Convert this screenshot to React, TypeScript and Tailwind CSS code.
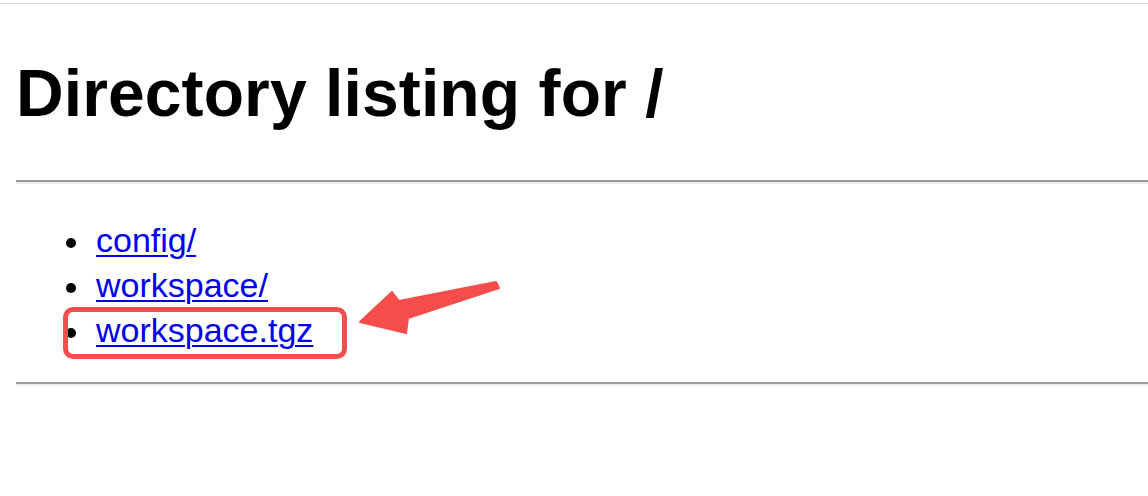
const entries = ['config/', 'workspace/', 'workspace.tgz'];

export default function App() {
  return (
    <div className="relative w-[1148px] h-[496px] bg-white overflow-hidden font-['Liberation_Sans',Arial,sans-serif]">
      {/* thin top edge */}
      <div className="h-[3px]" />
      <div className="h-px bg-[#dedede]" />

      <div className="pl-4">
        <h1 className="mt-[57px] text-[66px] leading-[65px] font-bold text-black tracking-[0.1px]">
          Directory listing for /
        </h1>

        <div className="mt-[54px] h-[4px] border-t-2 border-b-2 border-t-[#9b9b9b] border-b-[#ececec]" />

        <ul className="mt-[34px] pl-[80px] text-[34px] leading-[45px]">
          {entries.map((name) => (
            <li key={name} className="relative">
              <span className="absolute left-[-30px] top-[20px] w-[10px] h-[10px] rounded-full bg-black" />
              <a href="#" className="text-[#0000ee] underline underline-offset-[3px] decoration-2">
                {name}
              </a>
            </li>
          ))}
        </ul>

        <div className="mt-[29px] h-[4px] border-t-2 border-b-2 border-t-[#9b9b9b] border-b-[#ececec]" />
      </div>

      {/* annotation: highlight box */}
      <div className="absolute left-[63px] top-[307px] w-[284px] h-[52px] border-[5px] border-[#f44d4b] rounded-[10px]" />

      {/* annotation: arrow */}
      <svg className="absolute left-0 top-0" width="1148" height="496" viewBox="0 0 1148 496">
        <path
          d="M360 322 L392 292 L399 301 L496 282 L499 288 L408 318 L406 333 Z"
          fill="#f44d4b"
          stroke="#f44d4b"
          strokeWidth="2"
          strokeLinejoin="round"
        />
      </svg>
    </div>
  );
}
